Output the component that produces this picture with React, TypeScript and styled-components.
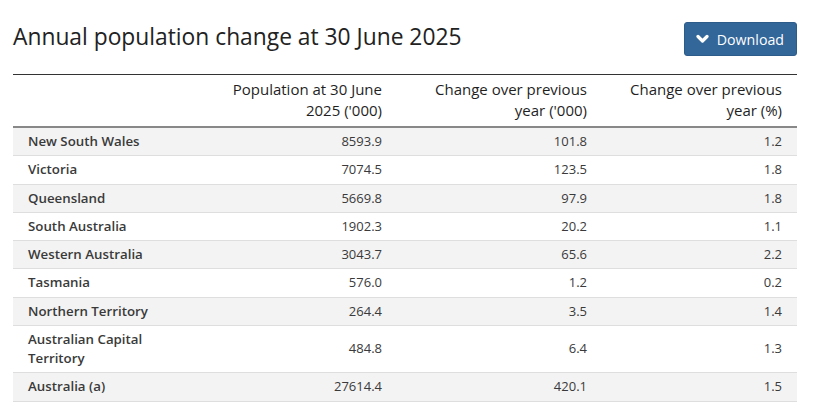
import React from "react";
import styled, { createGlobalStyle } from "styled-components";

const GlobalStyle = createGlobalStyle`
  html, body { margin: 0; padding: 0; background: #fff; }
  body { font-family: "Open Sans", "Liberation Sans", sans-serif; color: #333; }
`;

const Page = styled.div`
  width: 784px;
  margin-left: 13px;
  padding-top: 22px;
`;

const Header = styled.div`
  display: flex;
  justify-content: space-between;
  align-items: flex-start;
  margin-bottom: 18px;
`;

const Title = styled.h2`
  margin: 0;
  font-size: 22.8px;
  font-weight: 400;
  line-height: 30px;
  color: #222;
`;

const DownloadButton = styled.button`
  display: flex;
  align-items: center;
  gap: 8px;
  height: 34px;
  padding: 0 12px 0 11px;
  background: #336699;
  border: 1px solid #2e5c8a;
  border-radius: 3px;
  color: #fff;
  font-family: "Open Sans", "Liberation Sans", sans-serif;
  font-size: 14.2px;
  cursor: pointer;
`;

const Table = styled.table`
  width: 100%;
  table-layout: fixed;
  border-collapse: collapse;
  border-top: 1px solid #333;
  font-size: 13px;
`;

const Col = styled.col<{ $w: number }>`
  width: ${(p) => p.$w}px;
`;

const Th = styled.th`
  text-align: right;
  font-weight: 400;
  font-size: 15px;
  line-height: 21px;
  padding: 4px 15px 5px 15px;
  vertical-align: bottom;
  border-bottom: 2px solid #888;
  color: #1f1f1f;
`;

const Row = styled.tr<{ $striped: boolean }>`
  background: ${(p) => (p.$striped ? "#f3f3f3" : "#fff")};
  border-bottom: 1px solid #dedede;
`;

const NameCell = styled.td`
  text-align: left;
  font-weight: 600;
  font-size: 13.3px;
  padding: 4px 15px;
  line-height: 19.25px;
  color: #3a3a3a;
`;

const NumCell = styled.td`
  text-align: right;
  padding: 4px 15px;
  line-height: 19.25px;
  color: #3a3a3a;
`;

const rows: [string, string, string, string][] = [
  ["New South Wales", "8593.9", "101.8", "1.2"],
  ["Victoria", "7074.5", "123.5", "1.8"],
  ["Queensland", "5669.8", "97.9", "1.8"],
  ["South Australia", "1902.3", "20.2", "1.1"],
  ["Western Australia", "3043.7", "65.6", "2.2"],
  ["Tasmania", "576.0", "1.2", "0.2"],
  ["Northern Territory", "264.4", "3.5", "1.4"],
  ["Australian Capital Territory", "484.8", "6.4", "1.3"],
  ["Australia (a)", "27614.4", "420.1", "1.5"],
];

const Chevron = () => (
  <svg width="13" height="10" viewBox="0 0 13 10" aria-hidden="true">
    <polyline
      points="2,2.5 6.5,7 11,2.5"
      fill="none"
      stroke="#fff"
      strokeWidth="3.2"
      strokeLinecap="round"
      strokeLinejoin="round"
    />
  </svg>
);

export default function App() {
  return (
    <>
      <GlobalStyle />
      <Page>
        <Header>
          <Title>Annual population change at 30 June 2025</Title>
          <DownloadButton>
            <Chevron />
            Download
          </DownloadButton>
        </Header>
        <Table>
          <colgroup>
            <Col $w={184} />
            <Col $w={200} />
            <Col $w={205} />
            <Col $w={195} />
          </colgroup>
          <thead>
            <tr>
              <Th />
              <Th>Population at 30 June 2025 ('000)</Th>
              <Th>Change over previous year ('000)</Th>
              <Th>Change over previous year (%)</Th>
            </tr>
          </thead>
          <tbody>
            {rows.map((r, i) => (
              <Row key={r[0]} $striped={i % 2 === 0}>
                <NameCell>{r[0]}</NameCell>
                <NumCell>{r[1]}</NumCell>
                <NumCell>{r[2]}</NumCell>
                <NumCell>{r[3]}</NumCell>
              </Row>
            ))}
          </tbody>
        </Table>
      </Page>
    </>
  );
}
